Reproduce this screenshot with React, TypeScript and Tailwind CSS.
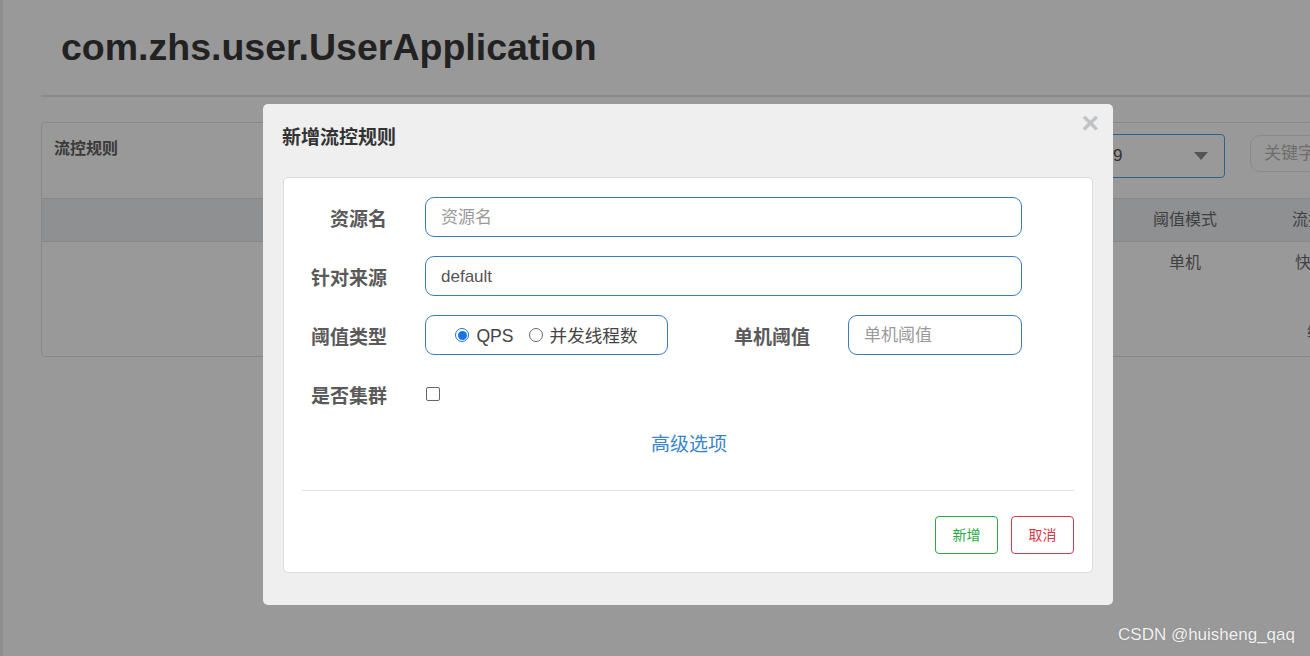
const cjk = "font-['Liberation_Sans','Noto_Sans_CJK_SC',sans-serif]";

function Field({ label, children }: { label: string; children: React.ReactNode }) {
  return (
    <div className="flex items-center h-[40px]">
      <div className="w-[85px] pt-[4px] text-right text-[19px] font-bold text-[#5a5a5a] leading-none">{label}</div>
      <div className="ml-[38px] flex items-center">{children}</div>
    </div>
  );
}

function Radio({ checked, label }: { checked?: boolean; label: string }) {
  return (
    <label className="flex items-center gap-[7px]">
      <span
        className={
          checked
            ? "w-[14px] h-[14px] rounded-full border border-[#1a73e8] flex items-center justify-center bg-white"
            : "w-[14px] h-[14px] rounded-full border border-[#666] bg-white"
        }
      >
        {checked && <span className="w-[9px] h-[9px] rounded-full bg-[#1a73e8]" />}
      </span>
      <span className="text-[17.6px] text-[#444] leading-none pt-[3px]">{label}</span>
    </label>
  );
}

export default function App() {
  return (
    <div className={`relative w-[1310px] h-[656px] overflow-hidden bg-[#999999] border-l-[3px] border-[#8e8e8e] ${cjk}`}>
      {/* page behind the overlay */}
      <div className="pl-[38px]">
        <h1 className="pl-[20px] pt-[24px] h-[95px] text-[37.5px] font-bold text-[#222] leading-[46px] font-['Liberation_Sans',sans-serif]">
          com.zhs.user.UserApplication
        </h1>
        <div className="h-[2px] bg-[#8a8a8a]" />
        <div className="mt-[25px] w-[1400px] h-[235px] rounded-[4px] border border-[#888]">
          <div className="flex h-[75px]">
            <div className="flex-1 pl-[12px] pt-[14px] text-[16px] font-bold text-[#3a3a3a]">流控规则</div>
            <div className="mt-[11px] w-[230px] h-[44px] rounded-[4px] border border-[#2f5f8f] flex items-center justify-between pl-[12px] pr-[16px]">
              <span className="text-[17px] text-[#333] ml-[105px]">9</span>
              <span className="w-0 h-0 border-l-[7px] border-r-[7px] border-t-[8px] border-l-transparent border-r-transparent border-t-[#555]" />
            </div>
            <div className="ml-[25px] mt-[12px] w-[190px] h-[37px] rounded-[10px] border border-[#8a8a8a] flex items-center pl-[13px] text-[17px] text-[#6e6e6e]">
              关键字
            </div>
          </div>
          <div className="flex h-[44px] bg-[#8f9092] border-y border-[#888] items-center text-[16px] text-[#3f3f3f]">
            <div className="flex-1" />
            <div className="w-[120px] text-center">阈值模式</div>
            <div className="w-[195px] pl-[47px]">流控效果</div>
          </div>
          <div className="flex h-[42px] items-center text-[16px] text-[#3f3f3f]">
            <div className="flex-1" />
            <div className="w-[120px] text-center">单机</div>
            <div className="w-[195px] pl-[50px]">快速失败</div>
          </div>
          <div className="flex pt-[36px] text-[16px] text-[#3f3f3f]">
            <div className="flex-1" />
            <div className="w-[120px]" />
            <div className="w-[195px] pl-[62px]">编辑</div>
          </div>
        </div>
      </div>

      {/* modal */}
      <div className="absolute left-[260px] top-[104px] w-[850px] h-[501px] rounded-[5px] bg-[#efefef] px-[20px]">
        <div className="relative h-[73px] flex items-center">
          <span className="text-[19px] font-bold text-[#333] mt-[-4px] ml-[-1px]">新增流控规则</span>
          <span className="absolute right-[-6px] top-[4px] text-[30px] leading-none font-bold text-[#c2c2c2]">×</span>
        </div>
        <div className="h-[396px] bg-white rounded-[5px] border border-[#dcdcdc] px-[18px] pt-[19px]">
          <div className="flex flex-col gap-[19px]">
            <Field label="资源名">
              <div className="w-[597px] h-[40px] rounded-[9px] border border-[#3a7bbf] flex items-center pl-[15px] pt-[2px] text-[17px] text-[#9a9a9a]">
                资源名
              </div>
            </Field>
            <Field label="针对来源">
              <div className="w-[597px] h-[40px] rounded-[9px] border border-[#3a7bbf] flex items-center pl-[15px] pt-[1px] text-[17px] text-[#555]">
                default
              </div>
            </Field>
            <div className="flex items-center">
              <Field label="阈值类型">
                <div className="w-[243px] h-[40px] rounded-[9px] border border-[#3a7bbf] flex items-center justify-center gap-[15px]">
                  <Radio checked label="QPS" />
                  <Radio label="并发线程数" />
                </div>
              </Field>
              <div className="w-[142px] pt-[4px] text-right text-[19px] font-bold text-[#5a5a5a] leading-none">单机阈值</div>
              <div className="ml-[38px] w-[174px] h-[40px] rounded-[9px] border border-[#3a7bbf] flex items-center pl-[15px] pt-[2px] text-[17px] text-[#9a9a9a]">
                单机阈值
              </div>
            </div>
            <Field label="是否集群">
              <span className="ml-[1px] w-[14px] h-[14px] rounded-[2px] border border-[#666] bg-white" />
            </Field>
          </div>
          <div className="h-[57px] flex items-center justify-center pt-[5px] text-[19px] text-[#3a86c8] pl-[2px]">高级选项</div>
          <div className="mt-[19px] h-px bg-[#e2e2e2]" />
          <div className="flex justify-end gap-[13px] mt-[25px]">
            <button className="w-[63px] h-[38px] rounded-[4px] border border-[#2aa845] text-[14px] text-[#2aa845] bg-white">新增</button>
            <button className="w-[63px] h-[38px] rounded-[4px] border border-[#d8394a] text-[14px] text-[#d8394a] bg-white">取消</button>
          </div>
        </div>
      </div>

      {/* watermark */}
      <div className="absolute right-[15px] bottom-[9px] text-[17px] text-[#f2f2f2] font-['Liberation_Sans',sans-serif] [text-shadow:0_0_1px_#777]">
        CSDN @huisheng_qaq
      </div>
    </div>
  );
}
